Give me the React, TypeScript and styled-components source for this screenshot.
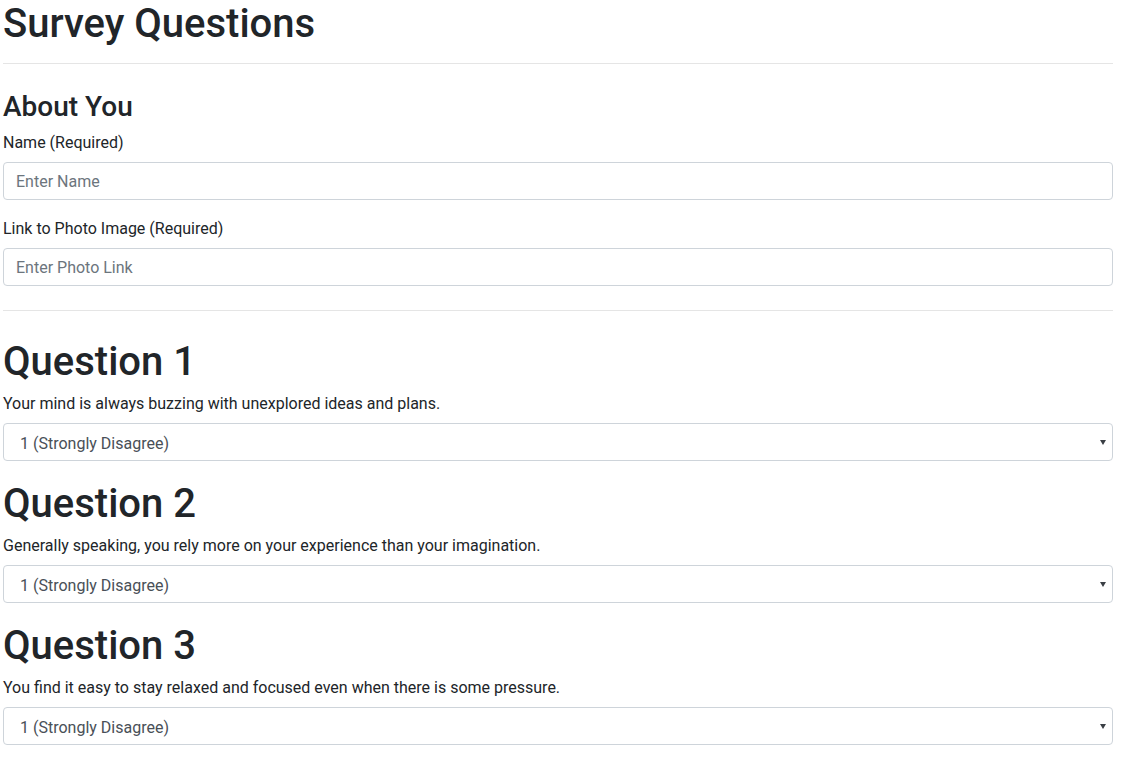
import React from "react";
import styled, { createGlobalStyle } from "styled-components";

const GlobalStyle = createGlobalStyle`
  *, *::before, *::after { box-sizing: border-box; }
  html, body { margin: 0; padding: 0; background: #fff; }
  body {
    font-family: Roboto, "Liberation Sans", Arial, sans-serif;
    font-size: 16px;
    line-height: 1.5;
    color: #212529;
    overflow: hidden;
  }
`;

const Container = styled.form`
  width: 1110px;
  margin-left: 3px;
  display: flex;
  flex-direction: column;
`;

const Title = styled.h1`
  margin: 0;
  font-size: 40px;
  line-height: 47px;
  font-weight: 500;
  color: #212529;
`;

const Divider = styled.hr<{ $top: number; $bottom: number }>`
  margin: ${(p) => p.$top}px 0 ${(p) => p.$bottom}px;
  border: 0;
  border-top: 1px solid rgba(0, 0, 0, 0.1);
  width: 100%;
`;

const SectionHeading = styled.h3`
  margin: 0 0 6px;
  font-size: 28px;
  line-height: 34px;
  font-weight: 500;
  color: #212529;
`;

const FormGroup = styled.div<{ $last?: boolean }>`
  display: flex;
  flex-direction: column;
  margin-bottom: ${(p) => (p.$last ? 0 : 16)}px;
`;

const Label = styled.label`
  display: block;
  margin-bottom: 8px;
  padding-top: 1px;
  height: 24px;
  font-size: 16px;
  line-height: 24px;
  color: #212529;
`;

const TextInput = styled.input`
  display: block;
  width: 100%;
  height: 38px;
  padding: 6px 12px;
  font-family: inherit;
  font-size: 16px;
  line-height: 24px;
  color: #495057;
  background: #fff;
  border: 1px solid #ced4da;
  border-radius: 4px;
  outline: none;
  &::placeholder {
    color: #6c757d;
    opacity: 1;
  }
`;

const QuestionList = styled.div`
  display: flex;
  flex-direction: column;
  gap: 19px;
`;

const Question = styled.div`
  display: flex;
  flex-direction: column;
`;

const QuestionTitle = styled.h1`
  margin: 0 0 5px;
  font-size: 40px;
  line-height: 48px;
  font-weight: 500;
  color: #212529;
`;

const SelectWrap = styled.div`
  position: relative;
  width: 100%;
  &::after {
    content: "";
    position: absolute;
    right: 7px;
    top: 17px;
    width: 0;
    height: 0;
    border-left: 3.5px solid transparent;
    border-right: 3.5px solid transparent;
    border-top: 5px solid #3a3f44;
    pointer-events: none;
  }
`;

const Select = styled.select`
  display: block;
  width: 100%;
  height: 38px;
  padding: 8px 24px 4px 16px;
  font-family: inherit;
  font-size: 16px;
  line-height: 24px;
  color: #495057;
  background: #fff;
  border: 1px solid #ced4da;
  border-radius: 4px;
  appearance: none;
  -webkit-appearance: none;
  outline: none;
`;

const options = [
  "1 (Strongly Disagree)",
  "2",
  "3",
  "4",
  "5 (Strongly Agree)",
];

const questions = [
  "Your mind is always buzzing with unexplored ideas and plans.",
  "Generally speaking, you rely more on your experience than your imagination.",
  "You find it easy to stay relaxed and focused even when there is some pressure.",
];

export default function App() {
  return (
    <>
      <GlobalStyle />
      <Container onSubmit={(e) => e.preventDefault()}>
        <Title>Survey Questions</Title>
        <Divider $top={16} $bottom={26} />
        <SectionHeading>About You</SectionHeading>
        <FormGroup>
          <Label htmlFor="name">Name (Required)</Label>
          <TextInput id="name" type="text" placeholder="Enter Name" />
        </FormGroup>
        <FormGroup $last>
          <Label htmlFor="photo">Link to Photo Image (Required)</Label>
          <TextInput id="photo" type="text" placeholder="Enter Photo Link" />
        </FormGroup>
        <Divider $top={24} $bottom={27} />
        <QuestionList>
          {questions.map((q, i) => (
            <Question key={i}>
              <QuestionTitle>Question {i + 1}</QuestionTitle>
              <Label htmlFor={`q${i + 1}`}>{q}</Label>
              <SelectWrap>
                <Select id={`q${i + 1}`} defaultValue={options[0]}>
                  {options.map((o) => (
                    <option key={o} value={o}>
                      {o}
                    </option>
                  ))}
                </Select>
              </SelectWrap>
            </Question>
          ))}
        </QuestionList>
      </Container>
    </>
  );
}
